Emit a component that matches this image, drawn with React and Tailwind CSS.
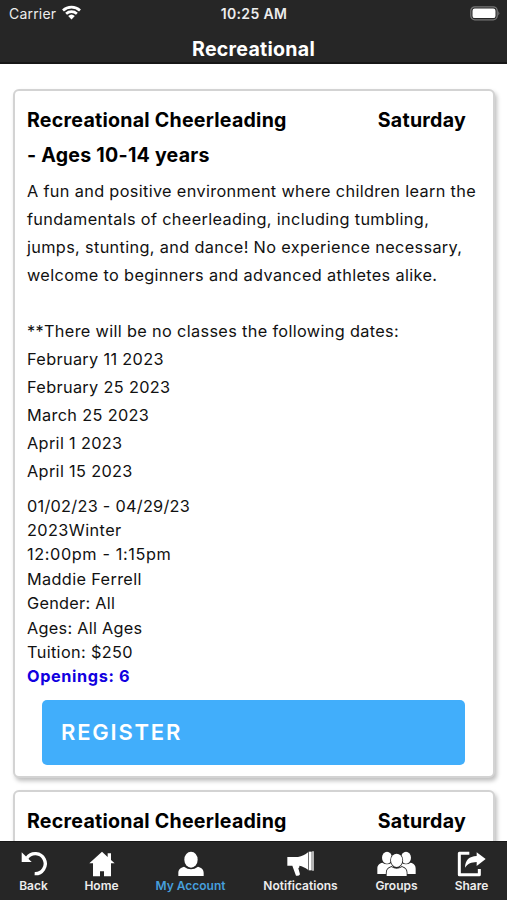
import React from 'react';

const description = [
  'A fun and positive environment where children learn the',
  'fundamentals of cheerleading, including tumbling,',
  'jumps, stunting, and dance! No experience necessary,',
  'welcome to beginners and advanced athletes alike.',
  '',
  '**There will be no classes the following dates:',
  'February 11 2023',
  'February 25 2023',
  'March 25 2023',
  'April 1 2023',
  'April 15 2023',
];

const details = [
  { text: '01/02/23 - 04/29/23' },
  { text: '2023Winter', style: 'tracking-[0.4px]' },
  { text: '12:00pm - 1:15pm', style: 'tracking-[0.6px]' },
  { text: 'Maddie Ferrell', style: 'tracking-[0.35px]' },
  { text: 'Gender: All' },
  { text: 'Ages: All Ages' },
  { text: 'Tuition: $250', style: 'tracking-[0.35px]' },
];

function BackIcon() {
  return (
    <svg width="26" height="26" viewBox="0 0 78 78" fill="none">
      <path d="M18 21A30 30 0 1 1 41 68" stroke="white" strokeWidth="10" />
      <path d="M2 4v29h30z" fill="white" />
    </svg>
  );
}

function HomeIcon() {
  return (
    <svg width="26" height="26" viewBox="0 0 78 78" fill="white">
      <path d="M39 2 1 37h11v39h21V61h12v15h21V37h11L66 27V7H56v11z" />
    </svg>
  );
}

function AccountIcon() {
  return (
    <svg width="26" height="26" viewBox="0 0 78 78" fill="white">
      <ellipse cx="39" cy="26" rx="20" ry="24" />
      <path d="M1 75V66C1 55 7 50 18 47q21 15 42 0c11 3 17 8 17 19v9z" />
    </svg>
  );
}

function NotificationsIcon() {
  return (
    <svg width="27" height="26" viewBox="0 0 81 78" fill="white">
      <path d="M1 18h32C45 17 54 11 63 4v52c-9-6-17-11-26-12v5l-3 3 5 18q-3 6-12 4L16 44H1z" />
      <path d="M65 2h9v56h-9z" />
      <path d="M76 1h4v58h-4z" />
    </svg>
  );
}

function GroupsIcon() {
  return (
    <svg width="39" height="26" viewBox="0 0 117 78" fill="white">
      <ellipse cx="30" cy="20" rx="15" ry="18" />
      <ellipse cx="87" cy="20" rx="15" ry="18" />
      <path d="M1 69V53C1 42 7 37 16 35q14 9 28 0l15 34zM116 69V53c0-11-6-16-15-18q-14 9-28 0L58 69z" />
      <g stroke="#262626" strokeWidth="5" paintOrder="stroke">
        <path d="M29 75V65c0-9 5-14 14-17q16 11 32 0c9 3 14 8 14 17v10z" />
        <ellipse cx="59" cy="28" rx="17" ry="20" />
      </g>
    </svg>
  );
}

function ShareIcon() {
  return (
    <svg width="29" height="26" viewBox="0 0 87 78" fill="none">
      <path d="M37 7H7v64h60V54" stroke="white" strokeWidth="9" strokeLinejoin="round" />
      <path d="M24 50C25 27 36 16 59 15V4l27 20-27 21V33C43 34 33 37 24 50z" fill="white" />
    </svg>
  );
}

const tabs = [
  { label: 'Back', icon: BackIcon, width: 'w-[29px]' },
  { label: 'Home', icon: HomeIcon, width: 'w-[35px]' },
  { label: 'My Account', icon: AccountIcon, width: 'w-[71px]', active: true },
  { label: 'Notifications', icon: NotificationsIcon, width: 'w-[77px]' },
  { label: 'Groups', icon: GroupsIcon, width: 'w-[43px]' },
  { label: 'Share', icon: ShareIcon, width: 'w-[35px]' },
];

function StatusBar() {
  return (
    <div className="grid h-7 grid-cols-3 items-center pl-[9px] pr-[7px] text-[#ededed]">
      <div className="flex items-center gap-1.5 pb-px text-[14px] tracking-[0.2px]">
        Carrier
        <svg className="mb-[2px]" width="19" height="15" viewBox="0 0 19 15" fill="none" stroke="white" strokeWidth="2.7">
          <path d="M1 5.4a12.4 12.4 0 0 1 17 0M4.1 8.8a8 8 0 0 1 10.8 0" />
          <path d="M9.5 14.5 6.2 11.1a4.8 4.8 0 0 1 6.6 0z" fill="white" stroke="none" />
        </svg>
      </div>
      <div className="pb-px pr-[1px] text-center text-[14px] font-semibold tracking-[0.35px]">10:25 AM</div>
      <div className="flex items-center justify-end pb-[2px]">
        <svg width="30" height="15" viewBox="0 0 30 15">
          <rect x="0.8" y="0.8" width="26.4" height="13" rx="4" fill="#262626" stroke="#777" strokeWidth="1.3" />
          <rect x="2.5" y="2.5" width="23" height="9.6" rx="2.2" fill="white" />
          <path d="M28.3 5q2 2.3 0 4.6z" fill="#777" />
        </svg>
      </div>
    </div>
  );
}

function ClassHeading({ title, day }) {
  return (
    <div className="flex justify-between pr-4 text-[19.6px] font-bold leading-[34.5px] tracking-[0.24px]">
      <h2 className="w-[268px]">{title}</h2>
      <span>{day}</span>
    </div>
  );
}

function Card({ children }) {
  return (
    <div className="rounded-md border-2 border-[#d3d3d3] bg-white pl-3 pr-[11px] shadow-[2px_3px_4px_rgba(0,0,0,0.25)]">
      {children}
    </div>
  );
}

function App() {
  return (
    <div className="flex h-[900px] w-[507px] flex-col overflow-hidden bg-white font-['Inter','Liberation_Sans',sans-serif] text-black">
      <header className="h-16 shrink-0 border-b-2 border-[#171717] bg-[#262626]">
        <StatusBar />
        <h1 className="mt-[7px] text-center text-[19.6px] font-bold leading-[28px] tracking-[0.25px] text-white">Recreational</h1>
      </header>

      <main className="flex min-h-0 flex-1 flex-col gap-3 overflow-hidden pl-[13px] pr-3 pt-[25px]">
        <Card>
          <div className="h-[685px] pt-[12px]">
            <ClassHeading title="Recreational Cheerleading - Ages 10-14 years" day="Saturday" />
            <div className="mt-[4.5px] text-[16.3px] leading-[28.1px] tracking-[0.34px] text-[#111]">
              {description.map((line, i) => (
                <p key={i} className="h-[28.1px] whitespace-nowrap">{line}</p>
              ))}
            </div>
            <div className="mt-[8px] text-[16.3px] leading-[24.4px] tracking-[0.27px] text-[#111]">
              {details.map(({ text, style }) => (
                <p key={text} className={style}>{text}</p>
              ))}
              <p className="font-bold tracking-[0.6px] text-[#1200e0]">Openings: 6</p>
            </div>
            <button className="ml-[15px] mt-[11.5px] block h-[65px] w-[423px] rounded-[5px] bg-[#41aefb] pl-[19px] text-left text-[22px] font-semibold tracking-[1.8px] text-white">
              REGISTER
            </button>
          </div>
        </Card>
        <Card>
          <div className="h-[60px] pt-[12px]">
            <ClassHeading title="Recreational Cheerleading" day="Saturday" />
          </div>
        </Card>
      </main>

      <nav className="flex h-[59px] shrink-0 justify-between border-t border-[#171717] bg-[#262626] pl-[19px] pr-[18px] pt-[9px]">
        {tabs.map(({ label, icon: Icon, width, active }) => (
          <a key={label} className={`flex flex-col items-center ${width}`}>
            <Icon />
            <span className={`whitespace-nowrap text-[12px] font-semibold leading-[18px] ${active ? 'text-[#469fdc]' : 'text-[#ededed]'}`}>
              {label}
            </span>
          </a>
        ))}
      </nav>
    </div>
  );
}

export default App;
